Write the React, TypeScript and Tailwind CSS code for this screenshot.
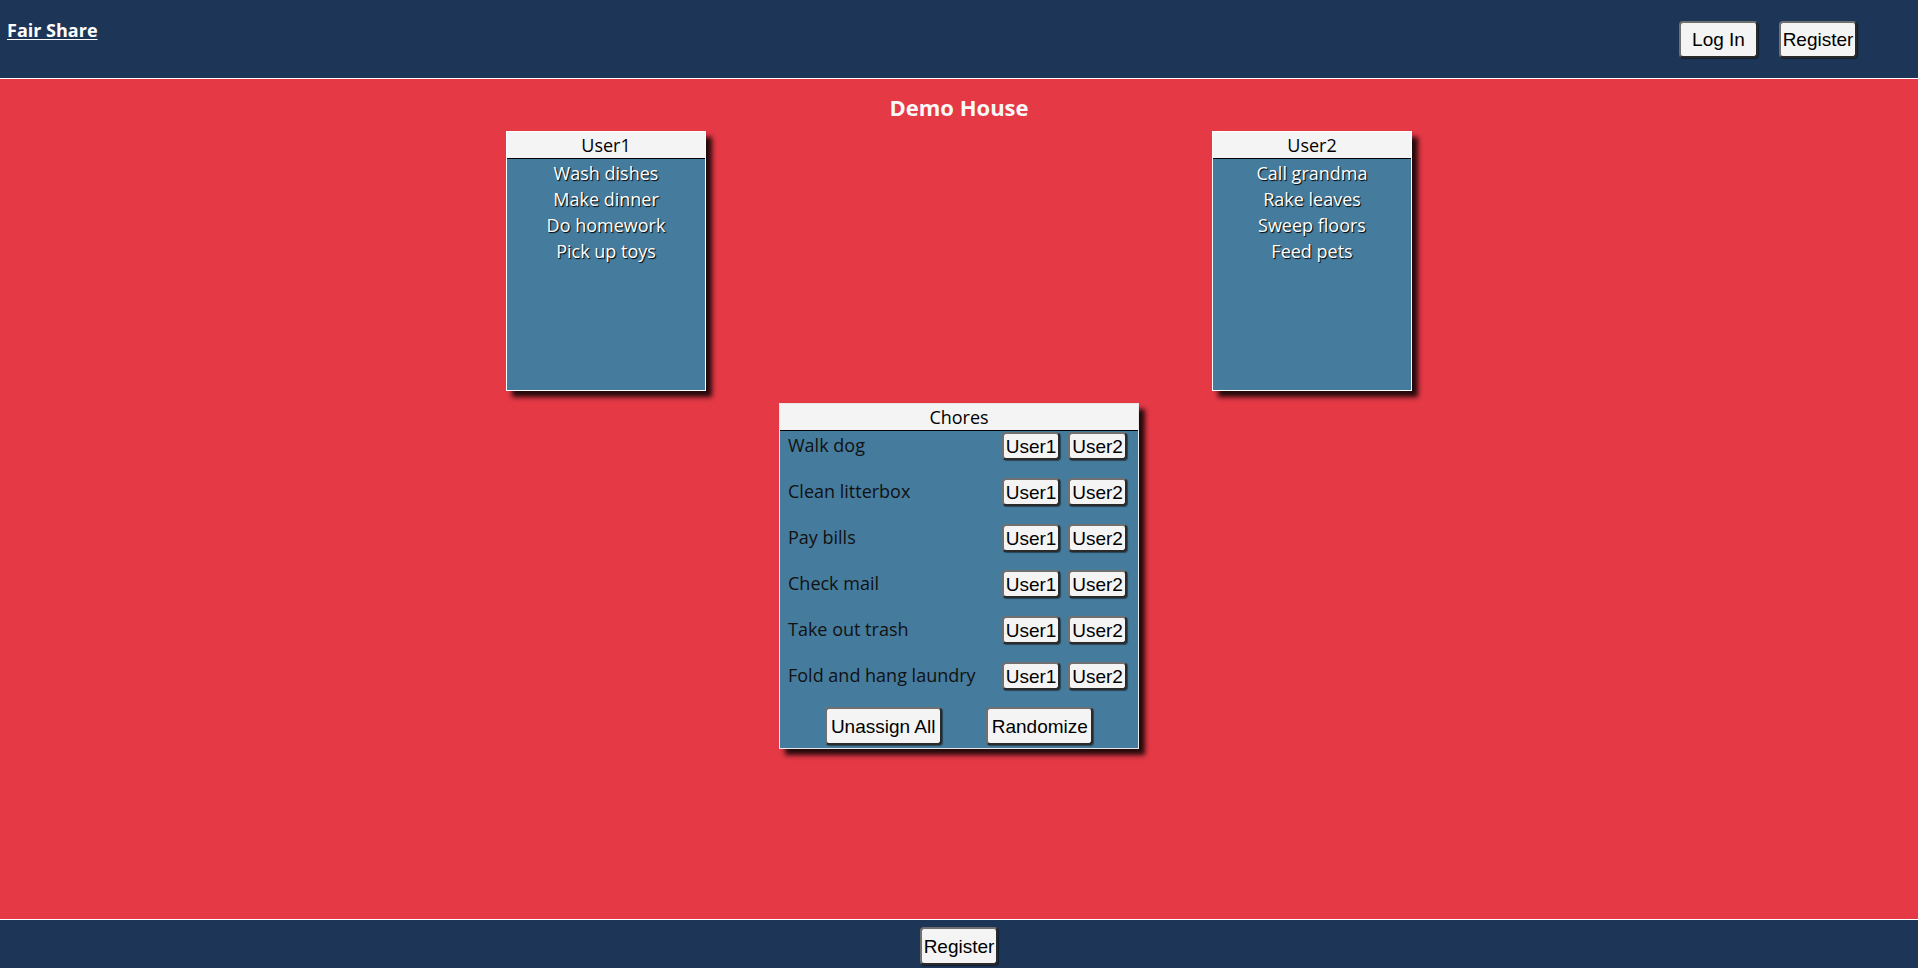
import React from "react";

const users: { name: string; chores: string[] }[] = [
  { name: "User1", chores: ["Wash dishes", "Make dinner", "Do homework", "Pick up toys"] },
  { name: "User2", chores: ["Call grandma", "Rake leaves", "Sweep floors", "Feed pets"] },
];

const unassigned = ["Walk dog", "Clean litterbox", "Pay bills", "Check mail", "Take out trash", "Fold and hang laundry"];

const btn =
  "bg-[#f4f4f4] text-black border-2 border-[#707070] border-r-[#2a2a2a] border-b-[#2a2a2a] rounded-[4px] font-['Liberation_Sans',Arial,sans-serif] text-[19px] leading-none shadow-[1px_1px_1px_rgba(0,0,0,0.45)] flex items-center justify-center";

function UserBox({ name, chores }: { name: string; chores: string[] }) {
  return (
    <div className="w-[200px] h-[260px] bg-[#457b9d] border border-white shadow-[6px_6px_5px_rgba(0,0,0,0.85)] flex flex-col">
      <div className="h-[27px] bg-[#f4f4f4] border-b border-black text-center text-[18px] leading-[27px] text-black">{name}</div>
      <ul className="pt-[1px] text-center text-white text-[18px] leading-[26px] [text-shadow:1px_1px_1px_#000]">
        {chores.map((c) => (
          <li key={c}>{c}</li>
        ))}
      </ul>
    </div>
  );
}

export default function App() {
  return (
    <div className="min-h-screen flex flex-col bg-[#e63946] font-['Open_Sans','Noto_Sans',sans-serif]">
      <header className="h-[79px] bg-[#1d3557] border-b border-white flex justify-between items-start">
        <a href="#" className="pl-[7px] pt-[17px] text-[18px] font-bold text-white underline underline-offset-2 leading-[26px]">
          Fair Share
        </a>
        <div className="flex items-center gap-[21px] pr-[61px] pt-[21px]">
          <button className={`${btn} w-[79px] h-[37px]`}>Log In</button>
          <button className={`${btn} w-[78px] h-[37px]`}>Register</button>
        </div>
      </header>

      <main className="flex-1 flex flex-col">
        <h2 className="pt-[14px] text-center text-[22px] font-bold leading-[28px] text-[#f8f8f8]">Demo House</h2>
        <div className="mt-[10px] flex justify-evenly">
          {users.map((u) => (
            <UserBox key={u.name} name={u.name} chores={u.chores} />
          ))}
        </div>

        <div className="mx-auto mt-[12px] w-[360px] bg-[#457b9d] border border-[#e8e8e8] shadow-[6px_6px_5px_rgba(0,0,0,0.85)]">
          <div className="h-[27px] bg-[#f4f4f4] border-b border-black text-center text-[18px] leading-[27px] text-black">Chores</div>
          {unassigned.map((c) => (
            <div key={c} className="h-[46px] pt-[1px] pl-[8px] pr-[11px] flex items-start justify-between">
              <span className="text-[18px] leading-[26px] text-[#111]">{c}</span>
              <div className="flex gap-[8px]">
                <button className={`${btn} w-[58px] h-[28px]`}>User1</button>
                <button className={`${btn} w-[59px] h-[28px]`}>User2</button>
              </div>
            </div>
          ))}
          <div className="flex justify-evenly pb-[3px]">
            <button className={`${btn} w-[117px] h-[38px]`}>Unassign All</button>
            <button className={`${btn} w-[107px] h-[38px]`}>Randomize</button>
          </div>
        </div>
      </main>

      <footer className="h-[49px] bg-[#1d3557] border-t border-white flex justify-center pt-[7px]">
        <button className={`${btn} w-[78px] h-[38px]`}>Register</button>
      </footer>
    </div>
  );
}
